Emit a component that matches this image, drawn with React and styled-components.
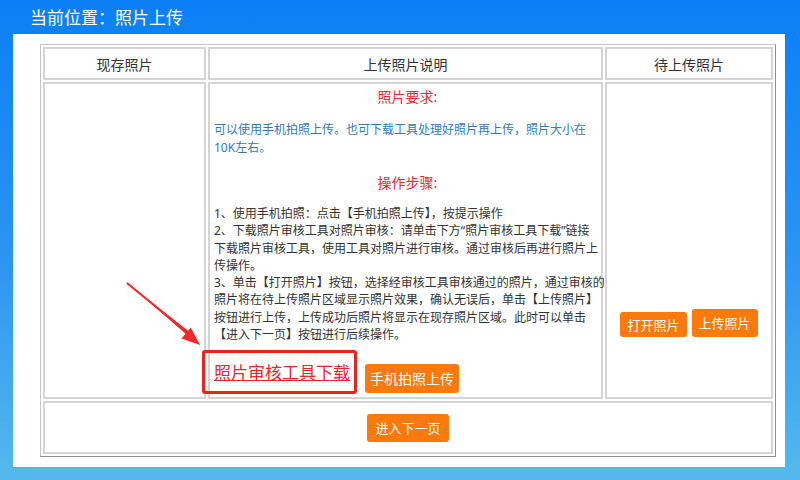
import styled, { createGlobalStyle } from "styled-components";

const GlobalStyle = createGlobalStyle`
  html, body {
    margin: 0;
    padding: 0;
  }
  body {
    font-family: "Noto Sans CJK SC", "Microsoft YaHei", sans-serif;
  }
`;

const Page = styled.div`
  position: relative;
  width: 800px;
  height: 480px;
  overflow: hidden;
  background: linear-gradient(180deg, #0a7ff5 0%, #2d95f1 55%, #55b9ec 100%);
`;

const TitleBar = styled.div`
  height: 34px;
  line-height: 34px;
  padding-left: 30px;
  color: #fff;
  font-size: 17px;
`;

const Panel = styled.div`
  margin: 0 15px 0 13px;
  height: 433px;
  box-sizing: border-box;
  padding: 10px 0 0 27px;
  background: #fff;
`;

const Table = styled.table`
  width: 736px;
  border-collapse: separate;
  border-spacing: 2px;
  border: 1px solid;
  border-color: #c4c4c4 #8f8f8f #8f8f8f #c4c4c4;
  table-layout: fixed;
  font-size: 12px;
  color: #333;
`;

const Cell = styled.td`
  box-sizing: border-box;
  border: 2px solid #d4d4d4;
  padding: 0;
  width: ${(p) => p.$w || "auto"};
  height: ${(p) => p.$h || "auto"};
  vertical-align: ${(p) => p.$valign || "middle"};
`;

const HeadCell = styled(Cell)`
  text-align: center;
  font-size: 14px;
  color: #333;
`;

const Notes = styled.div`
  display: flex;
  flex-direction: column;
  padding: 3px 0 0 4px;
  font-family: "Noto Sans", "Noto Sans CJK SC", sans-serif;
`;

const RedTitle = styled.div`
  color: #ee2a30;
  font-size: 14px;
  line-height: 20px;
  text-align: center;
  margin-top: ${(p) => p.$mt || 0}px;
`;

const BlueText = styled.div`
  color: #337ab7;
  font-size: 12px;
  line-height: 18px;
  margin-top: 14px;
  white-space: nowrap;
`;

const Steps = styled.div`
  margin-top: 12px;
  font-size: 12px;
  line-height: 17.3px;
  color: #333;
  white-space: nowrap;
`;

const Line = styled.div``;

const ActionRow = styled.div`
  display: flex;
  align-items: flex-start;
  margin-top: 19px;
  gap: 15px;
`;

const LinkWrap = styled.span`
  position: relative;
  display: inline-block;
  line-height: 20px;
  font-family: "Noto Sans CJK SC", sans-serif;

  &::after {
    content: "";
    position: absolute;
    left: -12px;
    right: -7px;
    top: -12px;
    bottom: -10px;
    border: 3px solid #e8241c;
    border-radius: 3px;
    pointer-events: none;
  }
`;

const DownloadLink = styled.a`
  color: #e8262e;
  font-size: 17px;
  text-decoration: underline;
  cursor: pointer;
`;

const OrangeButton = styled.button`
  box-sizing: border-box;
  height: ${(p) => p.$h || 29}px;
  padding: 0 ${(p) => p.$px || 7}px;
  margin-top: ${(p) => p.$mt || 0}px;
  border: none;
  border-radius: 3px;
  background: #fb7a0b;
  color: #fff;
  font-family: "Noto Sans CJK SC", sans-serif;
  font-size: ${(p) => p.$fs || 14}px;
  line-height: ${(p) => p.$h || 29}px;
  cursor: pointer;
`;

const ButtonGroup = styled.div`
  display: flex;
  justify-content: center;
  align-items: center;
  gap: 5px;
  padding-top: ${(p) => p.$pt || 0}px;
`;

const Arrow = styled.svg`
  position: absolute;
  left: 0;
  top: 0;
  pointer-events: none;
`;

const requirement = [
  "可以使用手机拍照上传。也可下载工具处理好照片再上传，照片大小在",
  "10K左右。",
];

const steps = [
  "1、使用手机拍照：点击【手机拍照上传】，按提示操作",
  "2、下载照片审核工具对照片审核：请单击下方“照片审核工具下载”链接",
  "下载照片审核工具，使用工具对照片进行审核。通过审核后再进行照片上",
  "传操作。",
  "3、单击【打开照片】按钮，选择经审核工具审核通过的照片，通过审核的",
  "照片将在待上传照片区域显示照片效果，确认无误后，单击【上传照片】",
  "按钮进行上传，上传成功后照片将显示在现存照片区域。此时可以单击",
  "【进入下一页】按钮进行后续操作。",
];

export default function App() {
  return (
    <>
      <GlobalStyle />
      <Page>
        <TitleBar>当前位置：照片上传</TitleBar>
        <Panel>
          <Table>
            <tbody>
              <tr>
                <HeadCell $w="163px" $h="33px">现存照片</HeadCell>
                <HeadCell $w="395px" $h="33px">上传照片说明</HeadCell>
                <HeadCell $w="168px" $h="33px">待上传照片</HeadCell>
              </tr>
              <tr>
                <Cell $h="317px" />
                <Cell $h="317px" $valign="top">
                  <Notes>
                    <RedTitle>照片要求:</RedTitle>
                    <BlueText>
                      {requirement.map((t) => (
                        <Line key={t}>{t}</Line>
                      ))}
                    </BlueText>
                    <RedTitle $mt={16}>操作步骤:</RedTitle>
                    <Steps>
                      {steps.map((t) => (
                        <Line key={t}>{t}</Line>
                      ))}
                    </Steps>
                    <ActionRow>
                      <LinkWrap>
                        <DownloadLink>照片审核工具下载</DownloadLink>
                      </LinkWrap>
                      <OrangeButton $mt={2} $px={5}>手机拍照上传</OrangeButton>
                    </ActionRow>
                  </Notes>
                </Cell>
                <Cell $h="317px" $valign="top">
                  <ButtonGroup $pt={225}>
                    <OrangeButton $h={25} $px={7} $fs={13} $mt={2}>打开照片</OrangeButton>
                    <OrangeButton $h={28} $px={7} $fs={13}>上传照片</OrangeButton>
                  </ButtonGroup>
                </Cell>
              </tr>
              <tr>
                <Cell colSpan={3} $h="53px">
                  <ButtonGroup>
                    <OrangeButton $h={28} $px={8} $fs={13}>进入下一页</OrangeButton>
                  </ButtonGroup>
                </Cell>
              </tr>
            </tbody>
          </Table>
        </Panel>
        <Arrow width="800" height="480" viewBox="0 0 800 480">
          <polygon points="126,282 128,284 189,331.5 186.5,334.5" fill="#ee2a2a" />
          <line x1="127" y1="283" x2="188" y2="333" stroke="#ee2a2a" strokeWidth="2.2" />
          <polygon points="200,345 181.5,338.5 190.8,327.5" fill="#ee2a2a" />
        </Arrow>
      </Page>
    </>
  );
}
